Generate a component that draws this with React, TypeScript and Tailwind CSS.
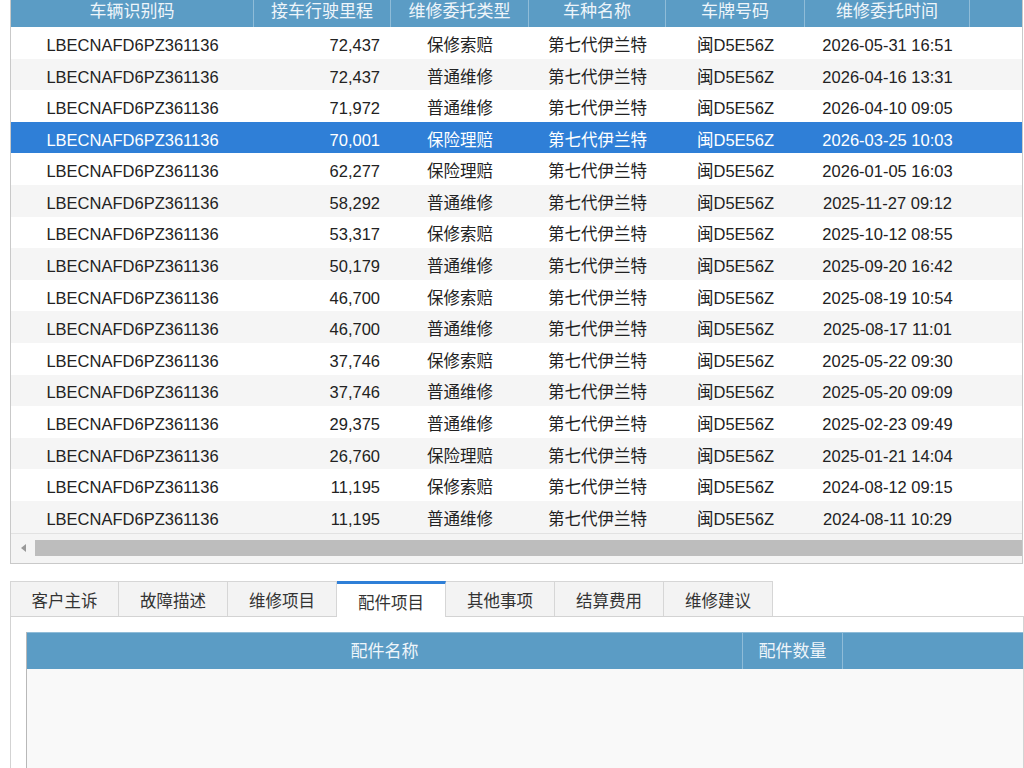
import clsx from "clsx";

const cn = clsx;

const FONT = { fontFamily: '"Liberation Sans", "Noto Sans CJK SC", sans-serif' };

type Row = { vin: string; km: string; type: string; model: string; plate: string; time: string };

const rows: Row[] = [
  ["72,437", "保修索赔", "2026-05-31 16:51"],
  ["72,437", "普通维修", "2026-04-16 13:31"],
  ["71,972", "普通维修", "2026-04-10 09:05"],
  ["70,001", "保险理赔", "2026-03-25 10:03"],
  ["62,277", "保险理赔", "2026-01-05 16:03"],
  ["58,292", "普通维修", "2025-11-27 09:12"],
  ["53,317", "保修索赔", "2025-10-12 08:55"],
  ["50,179", "普通维修", "2025-09-20 16:42"],
  ["46,700", "保修索赔", "2025-08-19 10:54"],
  ["46,700", "普通维修", "2025-08-17 11:01"],
  ["37,746", "保修索赔", "2025-05-22 09:30"],
  ["37,746", "普通维修", "2025-05-20 09:09"],
  ["29,375", "普通维修", "2025-02-23 09:49"],
  ["26,760", "保险理赔", "2025-01-21 14:04"],
  ["11,195", "保修索赔", "2024-08-12 09:15"],
  ["11,195", "普通维修", "2024-08-11 10:29"],
].map(([km, type, time]) => ({
  vin: "LBECNAFD6PZ361136",
  km,
  type,
  model: "第七代伊兰特",
  plate: "闽D5E56Z",
  time,
}));

const tabs = ["客户主诉", "故障描述", "维修项目", "配件项目", "其他事项", "结算费用", "维修建议"];

export default function App() {
  const selected = 3;
  return (
    <div className="w-[1024px] h-[768px] overflow-hidden bg-white text-[16.5px]" style={FONT}>
      {/* Upper grid */}
      <div className="ml-[10px] w-[1013px] border-l border-r border-b border-[#c9c9c9]">
        <div className="flex h-[27px] bg-[#5b9cc5] text-[#eef5fa] text-[17px] leading-[24px]">
          <div className="w-[243px] text-center border-r border-[#8fbcd8]">车辆识别码</div>
          <div className="w-[137px] text-center border-r border-[#8fbcd8]">接车行驶里程</div>
          <div className="w-[138px] text-center border-r border-[#8fbcd8]">维修委托类型</div>
          <div className="w-[137px] text-center border-r border-[#8fbcd8]">车种名称</div>
          <div className="w-[139px] text-center border-r border-[#8fbcd8]">车牌号码</div>
          <div className="w-[165px] text-center border-r border-[#8fbcd8]">维修委托时间</div>
          <div className="flex-1" />
        </div>
        {rows.map((r, i) => (
          <div
            key={i}
            className={cn(
              "flex h-[31.6px] items-center pt-[5px]",
              i === selected
                ? "bg-[#2f7fd7] text-white"
                : i % 2 === 1
                ? "bg-[#f5f5f5] text-[#222]"
                : "bg-white text-[#222]"
            )}
          >
            <div className="w-[243px] text-center">{r.vin}</div>
            <div className="w-[137px] text-right pr-[11px]">{r.km}</div>
            <div className="w-[138px] text-center">{r.type}</div>
            <div className="w-[137px] text-center">{r.model}</div>
            <div className="w-[139px] text-center">{r.plate}</div>
            <div className="w-[165px] text-center">{r.time}</div>
            <div className="flex-1" />
          </div>
        ))}
        {/* Horizontal scrollbar */}
        <div className="flex items-center h-[30px] bg-[#f4f4f4] border-t border-[#e2e2e2]">
          <div className="w-[24px] flex justify-center">
            <div className="w-0 h-0 border-y-[4px] border-y-transparent border-r-[5px] border-r-[#999]" />
          </div>
          <div className="flex-1 h-[16px] bg-[#bdbdbd]" />
        </div>
      </div>

      {/* Tabs */}
      <div className="mt-[17px] ml-[10px] flex h-[36px] border-b border-[#d3d3d3]">
        {tabs.map((t, i) => (
          <div
            key={t}
            className={cn(
              "w-[109px] flex items-center justify-center pt-[6px] text-[#333] border-r border-[#d6d6d6]",
              i === 0 && "border-l",
              i === 3
                ? "bg-white border-t-[3px] border-t-[#2f7fd7] -mb-px"
                : "bg-[#f3f3f3] border-t"
            )}
          >
            {t}
          </div>
        ))}
      </div>

      {/* Tab panel */}
      <div className="ml-[10px] h-[200px] border-l border-r border-[#d3d3d3] pl-[15px] pt-[15px]">
        <div className="h-full border-l border-[#b8b8b8]">
          <div className="flex h-[37px] bg-[#5b9cc5] text-[#eef5fa] text-[17px] border-t border-[#8fbcd8] items-center">
            <div className="w-[716px] h-full flex items-center justify-center pt-[2px] border-r border-[#8fbcd8]">配件名称</div>
            <div className="w-[100px] h-full flex items-center justify-center pt-[2px] border-r border-[#8fbcd8]">配件数量</div>
            <div className="flex-1" />
          </div>
          <div className="h-full bg-[#f9f9f9]" />
        </div>
      </div>
    </div>
  );
}
